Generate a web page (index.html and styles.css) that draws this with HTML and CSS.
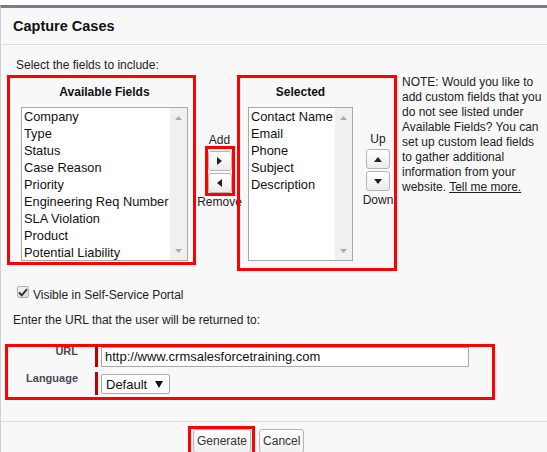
FILE: index.html
```html
<!DOCTYPE html>
<html>
<head>
<meta charset="utf-8">
<link rel="stylesheet" href="styles.css">
</head>
<body>
<div class="dialog">
  <div class="header"><h2 class="title">Capture Cases</h2></div>
  <div class="body">
    <p class="intro">Select the fields to include:</p>
    <div class="fields">
      <div class="box avail">
        <div class="col wide">
          <div class="col-title">Available Fields</div>
          <div class="listbox">
            <ul class="items">
              <li>Company</li>
              <li>Type</li>
              <li>Status</li>
              <li>Case Reason</li>
              <li>Priority</li>
              <li>Engineering Req Number</li>
              <li>SLA Violation</li>
              <li>Product</li>
              <li>Potential Liability</li>
            </ul>
            <div class="sb">
              <svg width="7" height="4" viewBox="0 0 7 4"><path d="M0 4 L3.5 0 L7 4 Z" fill="#a9a9a9"/></svg>
              <svg width="7" height="4" viewBox="0 0 7 4"><path d="M0 0 L3.5 4 L7 0 Z" fill="#a9a9a9"/></svg>
            </div>
          </div>
        </div>
      </div>
      <div class="mover">
        <div class="mover-inner">
          <span class="lbl">Add</span>
          <div class="box move-box">
            <button class="arrow-btn"><svg width="5" height="8" viewBox="0 0 5 8"><path d="M0 0 L5 4 L0 8 Z" fill="#222"/></svg></button>
            <button class="arrow-btn"><svg width="5" height="8" viewBox="0 0 5 8"><path d="M5 0 L0 4 L5 8 Z" fill="#222"/></svg></button>
          </div>
          <span class="lbl">Remove</span>
        </div>
      </div>
      <div class="box selected">
        <div class="col narrow">
          <div class="col-title">Selected</div>
          <div class="listbox">
            <ul class="items">
              <li>Contact Name</li>
              <li>Email</li>
              <li>Phone</li>
              <li>Subject</li>
              <li>Description</li>
            </ul>
            <div class="sb">
              <svg width="7" height="4" viewBox="0 0 7 4"><path d="M0 4 L3.5 0 L7 4 Z" fill="#a9a9a9"/></svg>
              <svg width="7" height="4" viewBox="0 0 7 4"><path d="M0 0 L3.5 4 L7 0 Z" fill="#a9a9a9"/></svg>
            </div>
          </div>
        </div>
        <div class="order">
          <span class="lbl">Up</span>
          <button class="arrow-btn up"><svg width="8" height="5" viewBox="0 0 8 5"><path d="M0 5 L4 0 L8 5 Z" fill="#222"/></svg></button>
          <button class="arrow-btn dn"><svg width="8" height="5" viewBox="0 0 8 5"><path d="M0 0 L4 5 L8 0 Z" fill="#222"/></svg></button>
          <span class="lbl down">Down</span>
        </div>
      </div>
      <p class="note">NOTE: Would you like to<br>add custom fields that you<br>do not see listed under<br>Available Fields? You can<br>set up custom lead fields<br>to gather additional<br>information from your<br>website. <a class="more" href="#">Tell me more.</a></p>
    </div>
    <div class="check">
      <span class="cb"><svg width="10" height="9" viewBox="0 0 10 9"><path d="M1 4.5 L3.8 7.3 L9 1.2" fill="none" stroke="#333" stroke-width="2"/></svg></span>
      <span>Visible in Self-Service Portal</span>
    </div>
    <p class="enter">Enter the URL that the user will be returned to:</p>
    <div class="box url-box">
      <div class="frow r1">
        <span class="flabel">URL</span>
        <span class="req"></span>
        <div class="input">http://www.crmsalesforcetraining.com</div>
      </div>
      <div class="frow r2">
        <span class="flabel">Language</span>
        <span class="req"></span>
        <div class="select"><span>Default</span><svg width="8" height="7" viewBox="0 0 8 7"><path d="M0 0 L8 0 L4 7 Z" fill="#111"/></svg></div>
      </div>
    </div>
  </div>
  <div class="footer">
    <div class="box gen-box"><button class="btn">Generate</button></div>
    <button class="btn cancel">Cancel</button>
  </div>
</div>
</body>
</html>
```

FILE: styles.css
```css
html, body {
  margin: 0;
  padding: 0;
}
body {
  background: #ffffff;
  font-family: "Liberation Sans", Arial, sans-serif;
  font-size: 12px;
  color: #222;
}
.dialog {
  margin-top: 5px;
  border-top: 3px solid #767c8f;
  border-left: 1px solid #cfcfcf;
  background: #f8f8f8;
  height: 460px;
}
.header {
  height: 36px;
  border-bottom: 1px solid #dcdcdc;
  display: flex;
  align-items: center;
  padding-left: 12px;
}
.title {
  margin: 0;
  font-size: 14.5px;
  font-weight: bold;
  color: #111;
}
.body {
  padding: 13px 0 21px 0;
}
.intro {
  margin: 0 0 2px 15px;
  line-height: 15px;
}
.fields {
  display: flex;
  align-items: flex-start;
  margin-left: 6px;
}
.box {
  border: 3px solid #ff0000;
  box-sizing: border-box;
}
.avail {
  width: 189px;
  height: 190px;
  padding-top: 6px;
  flex: none;
}
.col.wide {
  margin-left: 11px;
  width: 167px;
}
.col.narrow {
  width: 105px;
}
.col-title {
  font-weight: bold;
  line-height: 16px;
  text-align: center;
  margin-bottom: 7px;
  color: #111;
}
.listbox {
  height: 154px;
  background: #fff;
  border: 1px solid #a9a9a9;
  box-sizing: border-box;
  display: flex;
}
.items {
  list-style: none;
  margin: 0;
  padding: 0 0 0 2px;
  flex: 1;
  font-size: 12.8px;
  line-height: 17px;
  color: #111;
  white-space: nowrap;
  overflow: hidden;
}
.sb {
  width: 17px;
  flex: none;
  background: #f0f0f0;
  display: flex;
  flex-direction: column;
  align-items: center;
  justify-content: space-between;
  padding: 8px 0 7px 0;
  box-sizing: border-box;
}
.mover {
  width: 41px;
  flex: none;
}
.mover-inner {
  width: 45px;
  margin-left: 1px;
  padding-top: 59px;
  display: flex;
  flex-direction: column;
  align-items: center;
}
.lbl {
  line-height: 12px;
}
.move-box {
  width: 30px;
  height: 50px;
  padding-top: 2px;
  display: flex;
  flex-direction: column;
  gap: 2px;
}
.arrow-btn {
  width: 24px;
  height: 20px;
  padding: 0;
  margin: 0;
  border: 1px solid #b5b5b5;
  border-radius: 3px;
  background: linear-gradient(#ffffff, #ececec);
  display: flex;
  align-items: center;
  justify-content: center;
  box-sizing: border-box;
}
.selected {
  width: 160px;
  height: 196px;
  padding: 6px 0 0 8px;
  display: flex;
  align-items: flex-start;
  flex: none;
}
.order {
  margin-left: 13px;
  width: 24px;
  padding-top: 49px;
  display: flex;
  flex-direction: column;
  align-items: center;
}
.order .up {
  margin-top: 4px;
}
.order .dn {
  margin-top: 2px;
}
.order .down {
  margin-top: 3px;
}
.note {
  margin: 0 0 0 5px;
  line-height: 15px;
  white-space: nowrap;
}
.more {
  color: #222;
  text-decoration: underline;
}
.check {
  display: flex;
  align-items: flex-start;
  margin: 17px 0 0 16px;
  line-height: 15px;
}
.cb {
  width: 12px;
  height: 12px;
  margin-top: -2px;
  margin-right: 4px;
  border: 1px solid #b0b0b0;
  border-radius: 2px;
  background: linear-gradient(#f4f4f4, #dcdcdc);
  box-sizing: border-box;
  display: flex;
  align-items: center;
  justify-content: center;
}
.enter {
  margin: 10px 0 0 12px;
  line-height: 15px;
}
.url-box {
  margin: 16px 0 0 4px;
  width: 490px;
  height: 56px;
}
.frow {
  display: flex;
  align-items: flex-start;
}
.r1 {
  margin-top: -2px;
  height: 22px;
}
.r2 {
  margin-top: 5px;
  height: 23px;
}
.flabel {
  width: 70px;
  text-align: right;
  font-size: 11px;
  font-weight: bold;
  line-height: 13px;
  color: #4a4a56;
}
.req {
  width: 3px;
  height: 100%;
  margin-left: 17px;
  background: #c00000;
}
.input {
  margin: 2px 0 0 3px;
  width: 368px;
  height: 20px;
  border: 1px solid #a9a9a9;
  background: #fff;
  box-sizing: border-box;
  font-size: 13px;
  line-height: 18px;
  padding-left: 3px;
  color: #111;
}
.select {
  margin: 2px 0 0 3px;
  width: 69px;
  height: 20px;
  border: 1px solid #a9a9a9;
  border-radius: 2px;
  background: #fff;
  box-sizing: border-box;
  display: flex;
  align-items: center;
  padding-left: 4px;
  font-size: 13px;
  color: #111;
}
.select svg {
  margin-left: auto;
  margin-right: 6px;
}
.footer {
  border-top: 1px solid #dcdcdc;
  padding: 4px 0 0 187px;
  display: flex;
  align-items: flex-start;
}
.gen-box {
  padding: 0 1px 0 2px;
  height: 30px;
}
.btn {
  height: 24px;
  margin: 0;
  padding: 0 3px;
  border: 1px solid #b5b5b5;
  border-radius: 3px;
  background: linear-gradient(#ffffff, #f0f0f0);
  font-family: "Liberation Sans", Arial, sans-serif;
  font-size: 12px;
  color: #333;
  box-sizing: border-box;
}
.cancel {
  margin: 3px 0 0 4px;
}
```
